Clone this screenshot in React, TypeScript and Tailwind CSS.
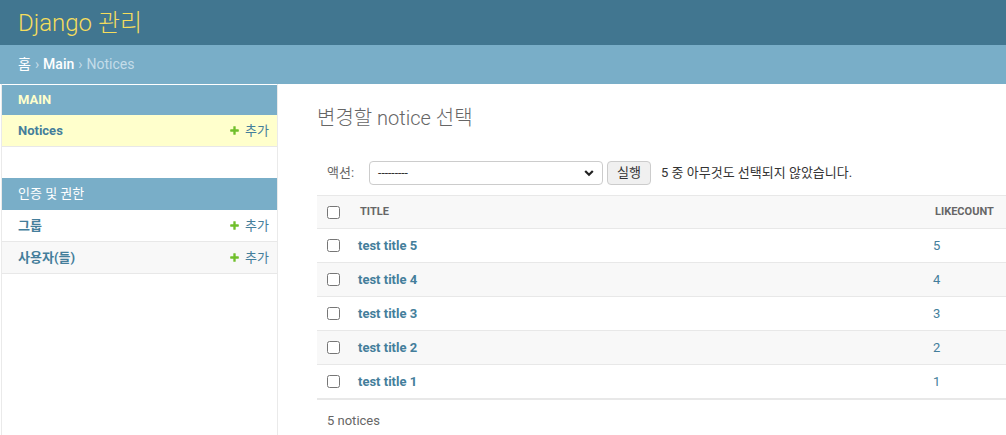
import React from "react";

const FONT = { fontFamily: 'Roboto, "Noto Sans CJK KR", "DejaVu Sans", Arial, sans-serif' };

function AddIcon() {
  return (
    <svg width="11" height="11" viewBox="0 0 1792 1792" className="mr-[5px] shrink-0">
      <path
        fill="#70bf2b"
        d="M1600 796v192q0 40-28 68t-68 28h-416v416q0 40-28 68t-68 28h-192q-40 0-68-28t-28-68v-416h-416q-40 0-68-28t-28-68v-192q0-40 28-68t68-28h416v-416q0-40 28-68t68-28h192q40 0 68 28t28 68v416h416q40 0 68 28t28 68z"
      />
    </svg>
  );
}

function SideRow({ label, current, even }: { label: string; current?: boolean; even?: boolean }) {
  return (
    <div
      className={`flex h-[32px] items-center justify-between border-b border-[#e8e8e8] pl-[16px] pr-[8px] text-[13px] ${
        current ? "bg-[#ffffcc]" : even ? "bg-[#f8f8f8]" : "bg-white"
      }`}
    >
      <span className="font-bold text-[#447e9b]">{label}</span>
      <span className="flex items-center text-[#447e9b]">
        <AddIcon />
        추가
      </span>
    </div>
  );
}

const rows = [
  { t: "test title 5", n: 5 },
  { t: "test title 4", n: 4 },
  { t: "test title 3", n: 3 },
  { t: "test title 2", n: 2 },
  { t: "test title 1", n: 1 },
];

export default function App() {
  return (
    <div className="h-[435px] w-[1006px] overflow-hidden bg-white" style={FONT}>
      {/* header */}
      <div className="flex h-[45px] items-center bg-[#417690] px-[18px]">
        <span className="text-[24px] font-light leading-[28px] text-[#f5dd5d]">Django 관리</span>
      </div>
      {/* breadcrumbs */}
      <div className="flex h-[39px] items-center bg-[#79aec8] px-[18px] text-[14px] text-[#c4dce8]">
        <span className="text-white">홈</span>
        <span className="mx-[4px]">›</span>
        <span className="font-medium text-white">Main</span>
        <span className="mx-[4px]">›</span>
        <span>Notices</span>
      </div>
      <div className="flex h-[351px]">
        {/* sidebar */}
        <div className="ml-px h-full w-[277px] shrink-0 border-l border-r border-[#eaeaea]">
          <div className="mt-px flex h-[30px] items-center bg-[#79aec8] pl-[16px] text-[13px] font-bold text-[#ffffcc]">
            MAIN
          </div>
          <SideRow label="Notices" current />
          <div className="mt-[31px] flex h-[32px] items-center bg-[#79aec8] pl-[16px] text-[13px] text-white">
            인증 및 권한
          </div>
          <SideRow label="그룹" />
          <SideRow label="사용자(들)" even />
        </div>
        {/* content */}
        <div className="min-w-0 flex-1 overflow-hidden pl-[39px]">
          <h1 className="mt-[22px] mb-[20px] h-[24px] text-[20px] font-light leading-[24px] text-[#666]">
            변경할 notice 선택
          </h1>
          <div className="flex h-[45px] items-center px-[10px] text-[13px] leading-[24px] text-[#666]">
            <span>액션:</span>
            <div className="ml-[15px] flex h-[24px] w-[234px] items-center justify-between rounded-[4px] border border-[#cccccc] bg-white pl-[8px] pr-[8px] text-[#333]">
              <span className="text-[12px] leading-none">---------</span>
              <svg width="10" height="8" viewBox="0 0 10 8">
                <path d="M1.2 2 L5 5.8 L8.8 2" fill="none" stroke="#222" strokeWidth="2.2" />
              </svg>
            </div>
            <div className="ml-[4px] flex h-[24px] w-[44px] items-center justify-center rounded-[4px] border border-[#cccccc] bg-[#f0f0f0] text-[13px] text-[#333]">
              실행
            </div>
            <span className="ml-[10px] text-[#333]">5 중 아무것도 선택되지 않았습니다.</span>
          </div>
          {/* table */}
          <div className="w-[689px] text-[13px]">
            <div className="grid h-[34px] grid-cols-[33px_575px_1fr] items-center border-y border-[#e8e8e8] bg-[#f8f8f8] text-[11px] font-bold text-[#666]">
              <div className="flex pl-[10px]">
                <input type="checkbox" className="m-0 h-[13px] w-[13px]" readOnly />
              </div>
              <div className="pl-[10px]">TITLE</div>
              <div className="pl-[10px]">LIKECOUNT</div>
            </div>
            {rows.map((r, i) => (
              <div
                key={r.t}
                className={`grid h-[34px] grid-cols-[33px_575px_1fr] items-center border-b border-[#e8e8e8] ${
                  i % 2 === 1 ? "bg-[#f8f8f8]" : "bg-white"
                }`}
              >
                <div className="flex pl-[10px]">
                  <input type="checkbox" className="m-0 h-[13px] w-[13px]" readOnly />
                </div>
                <div className="pl-[8px] font-bold text-[#447e9b]">{r.t}</div>
                <div className="pl-[8px] text-[#447e9b]">{r.n}</div>
              </div>
            ))}
            <div className="border-t border-[#e8e8e8] py-[10px] pl-[10px] text-[13px] leading-[22px] text-[#666]">
              5 notices
            </div>
          </div>
        </div>
      </div>
    </div>
  );
}
